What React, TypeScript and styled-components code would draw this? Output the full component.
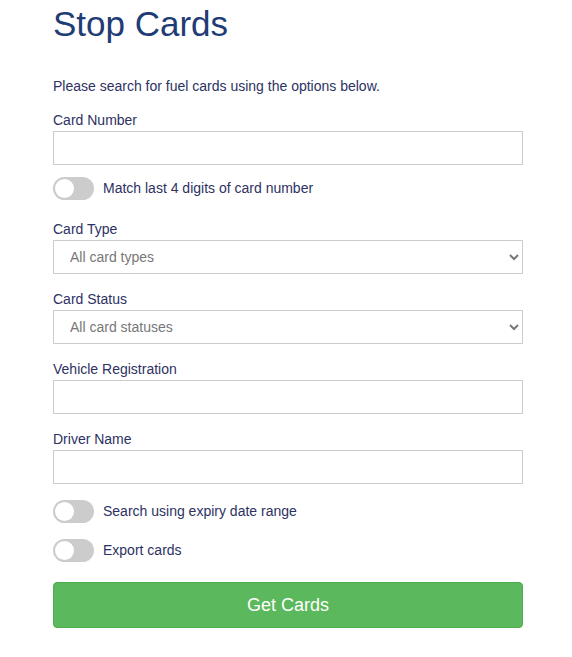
import styled, { createGlobalStyle } from "styled-components";
import { useState } from "react";

const GlobalStyle = createGlobalStyle`
  body {
    margin: 0;
    background: #ffffff;
    font-family: "Liberation Sans", Arial, sans-serif;
    color: #2d3263;
  }
`;

const Page = styled.div`
  width: 470px;
  padding: 0 0 20px 53px;
`;

const Title = styled.h1`
  font-size: 35px;
  font-weight: 400;
  line-height: 38px;
  color: #1f3c76;
  margin: 5px 0 0;
`;

const Intro = styled.p`
  font-size: 14px;
  line-height: 20px;
  margin: 33px 0 14px;
`;

const Group = styled.div<{ $bottom?: number }>`
  display: flex;
  flex-direction: column;
  margin-bottom: ${(p) => p.$bottom ?? 15}px;
`;

const Label = styled.label`
  font-size: 14px;
  line-height: 21px;
`;

const TextInput = styled.input`
  box-sizing: border-box;
  height: 34px;
  width: 100%;
  border: 1px solid #cccccc;
  border-radius: 0;
  padding: 6px 12px;
  font-size: 14px;
  font-family: inherit;
  outline: none;
`;

const Select = styled.select`
  box-sizing: border-box;
  height: 34px;
  width: 100%;
  border: 1px solid #cccccc;
  border-radius: 0;
  padding: 6px 8px 6px 12px;
  font-size: 14px;
  font-family: inherit;
  color: #777777;
  background: #ffffff;
  outline: none;
`;

const ToggleRow = styled.label<{ $top?: number; $bottom?: number }>`
  display: flex;
  align-items: center;
  gap: 9px;
  height: 24px;
  margin-top: ${(p) => p.$top ?? 0}px;
  margin-bottom: ${(p) => p.$bottom ?? 15}px;
  font-size: 14px;
  cursor: pointer;
`;

const Track = styled.span<{ $on: boolean }>`
  position: relative;
  width: 41px;
  height: 23px;
  border-radius: 12px;
  background: ${(p) => (p.$on ? "#5cb85c" : "#cccccc")};
  flex-shrink: 0;
`;

const Knob = styled.span<{ $on: boolean }>`
  position: absolute;
  top: 2px;
  left: ${(p) => (p.$on ? 20 : 2)}px;
  width: 19px;
  height: 19px;
  border-radius: 50%;
  background: #ffffff;
`;

const Button = styled.button`
  display: block;
  width: 100%;
  height: 46px;
  margin-top: 20px;
  border: 1px solid #4cae4c;
  border-radius: 4px;
  background: #5cb85c;
  color: #ffffff;
  font-size: 18px;
  font-family: inherit;
  cursor: pointer;
`;

const Toggle = ({
  label,
  top,
  bottom,
}: {
  label: string;
  top?: number;
  bottom?: number;
}) => {
  const [on, setOn] = useState(false);
  return (
    <ToggleRow $top={top} $bottom={bottom} onClick={() => setOn(!on)}>
      <Track $on={on}>
        <Knob $on={on} />
      </Track>
      {label}
    </ToggleRow>
  );
};

export default function App() {
  return (
    <Page>
      <GlobalStyle />
      <Title>Stop Cards</Title>
      <Intro>Please search for fuel cards using the options below.</Intro>

      <Group $bottom={0}>
        <Label>Card Number</Label>
        <TextInput />
      </Group>
      <Toggle label="Match last 4 digits of card number" top={11} bottom={19} />

      <Group>
        <Label>Card Type</Label>
        <Select defaultValue="">
          <option value="">All card types</option>
        </Select>
      </Group>

      <Group>
        <Label>Card Status</Label>
        <Select defaultValue="">
          <option value="">All card statuses</option>
        </Select>
      </Group>

      <Group>
        <Label>Vehicle Registration</Label>
        <TextInput />
      </Group>

      <Group>
        <Label>Driver Name</Label>
        <TextInput />
      </Group>

      <Toggle label="Search using expiry date range" top={1} />
      <Toggle label="Export cards" />

      <Button>Get Cards</Button>
    </Page>
  );
}
